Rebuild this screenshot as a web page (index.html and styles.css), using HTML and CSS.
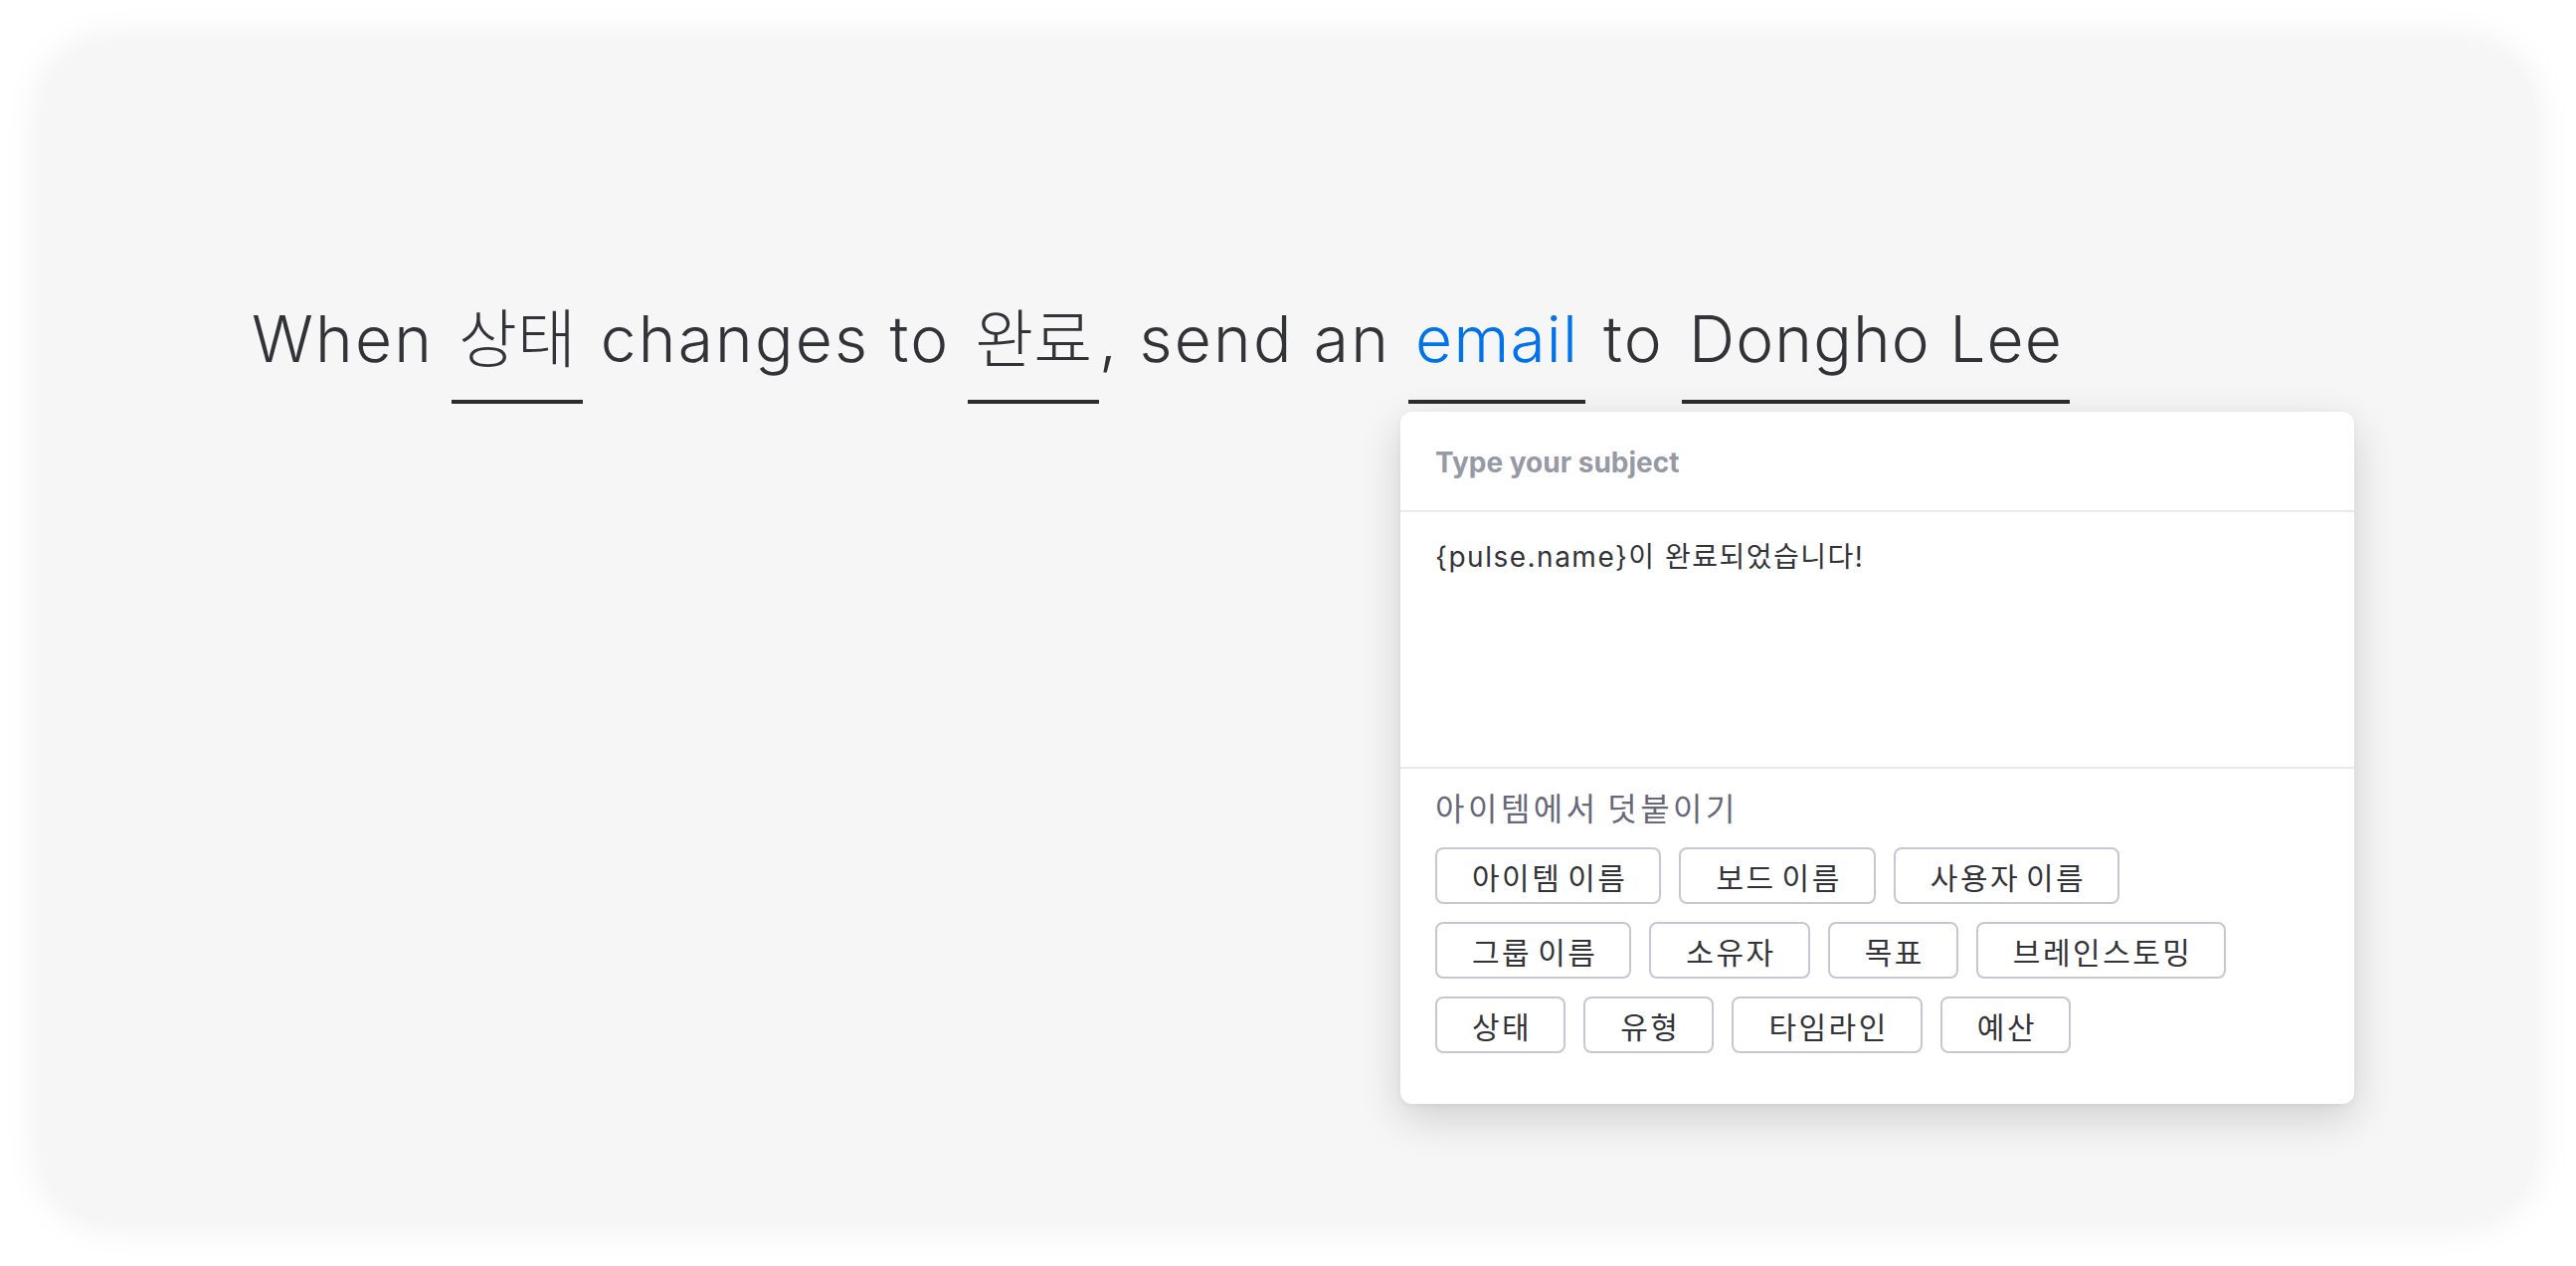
FILE: index.html
```html
<!DOCTYPE html>
<html lang="ko">
<head>
<meta charset="utf-8">
<title>Automation recipe</title>
<link rel="stylesheet" href="styles.css">
</head>
<body>
  <main class="card">
    <h1 class="recipe">
      <span class="word">When</span>
      <span class="blank blank-ko">상태</span>
      <span class="word">changes to</span>
      <span class="blank blank-ko">완료</span><span class="word comma">, send an</span>
      <span class="blank blank-active">email</span>
      <span class="word">to</span>
      <span class="blank">Dongho Lee</span>
    </h1>

    <section class="popover">
      <div class="subject">Type your subject</div>
      <div class="body-text">{pulse.name}이 완료되었습니다!</div>
      <div class="attach">
        <div class="attach-label">아이템에서 덧붙이기</div>
        <div class="chips">
          <button class="chip">아이템 이름</button>
          <button class="chip">보드 이름</button>
          <button class="chip">사용자 이름</button>
          <button class="chip">그룹 이름</button>
          <button class="chip">소유자</button>
          <button class="chip">목표</button>
          <button class="chip">브레인스토밍</button>
          <button class="chip">상태</button>
          <button class="chip">유형</button>
          <button class="chip">타임라인</button>
          <button class="chip">예산</button>
        </div>
      </div>
    </section>
  </main>
</body>
</html>
```

FILE: styles.css
```css
html, body {
  margin: 0;
  height: 100%;
}

body {
  box-sizing: border-box;
  padding: 42px 43px 43px 42px;
  background: #ffffff;
  font-family: "Inter", "Noto Sans CJK KR", sans-serif;
  color: #323338;
}

.card {
  position: relative;
  box-sizing: border-box;
  height: 100%;
  background: #f6f6f6;
  border-radius: 68px;
  box-shadow: 0 0 40px rgba(0, 0, 0, 0.08);
  padding: 267px 0 0 211px;
}

.recipe {
  margin: 0;
  display: flex;
  align-items: baseline;
  gap: 0 18px;
  font-family: "Inter", "Noto Sans CJK KR", sans-serif;
  font-weight: 300;
  font-size: 64px;
  line-height: 64px;
  letter-spacing: 2.2px;
  color: #323338;
}

.word {
  white-space: pre;
}

.comma {
  margin-left: -18px;
}

.blank {
  display: inline-block;
  padding: 0 7px 29px;
  border-bottom: 4px solid #2b2c30;
  white-space: pre;
  letter-spacing: 1.2px;
}

.blank-ko {
  letter-spacing: 0;
}

.blank-active {
  color: #0073ea;
}

.popover {
  position: absolute;
  left: 1366px;
  top: 372px;
  width: 959px;
  height: 696px;
  box-sizing: border-box;
  background: #ffffff;
  border-radius: 12px;
  box-shadow: 0 14px 44px rgba(0, 0, 0, 0.16), 0 2px 6px rgba(0, 0, 0, 0.05);
  display: flex;
  flex-direction: column;
}

.subject {
  height: 101px;
  box-sizing: border-box;
  padding: 2px 35px 0;
  display: flex;
  align-items: center;
  font-weight: 700;
  font-size: 28px;
  color: #9699a6;
  border-bottom: 2px solid #e6e9ef;
}

.body-text {
  height: 258px;
  box-sizing: border-box;
  padding: 28px 35px 0;
  font-size: 28px;
  line-height: 34px;
  letter-spacing: 1.5px;
  color: #323338;
  border-bottom: 2px solid #e6e9ef;
}

.attach {
  padding: 21px 35px 0;
}

.attach-label {
  font-size: 32px;
  line-height: 40px;
  letter-spacing: 3.5px;
  word-spacing: -4px;
  color: #676879;
}

.chips {
  margin-top: 18px;
  display: flex;
  flex-wrap: wrap;
  gap: 18px;
  width: 840px;
}

.chip {
  height: 57px;
  box-sizing: border-box;
  padding: 0 32px 0 35px;
  border: 2px solid #c5c7d4;
  border-radius: 8px;
  background: #ffffff;
  font-family: "Inter", "Noto Sans CJK KR", sans-serif;
  font-size: 30px;
  letter-spacing: 2.5px;
  word-spacing: -5px;
  color: #323338;
}
```
